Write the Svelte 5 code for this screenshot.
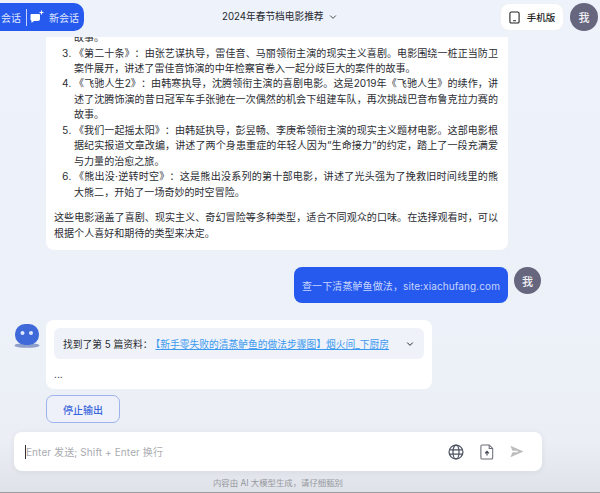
<script>
  const movies = [
    { title: '《第二十条》', body: '：由张艺谋执导，雷佳音、马丽领衔主演的现实主义喜剧。电影围绕一桩正当防卫案件展开，讲述了雷佳音饰演的中年检察官卷入一起分歧巨大的案件的故事。' },
    { title: '《飞驰人生2》', body: '：由韩寒执导，沈腾领衔主演的喜剧电影。这是2019年《飞驰人生》的续作，讲述了沈腾饰演的昔日冠军车手张驰在一次偶然的机会下组建车队，再次挑战巴音布鲁克拉力赛的故事。' },
    { title: '《我们一起摇太阳》', body: '：由韩延执导，彭昱畅、李庚希领衔主演的现实主义题材电影。这部电影根据纪实报道文章改编，讲述了两个身患重症的年轻人因为“生命接力”的约定，踏上了一段充满爱与力量的治愈之旅。' },
    { title: '《熊出没·逆转时空》', body: '：这是熊出没系列的第十部电影，讲述了光头强为了挽救旧时间线里的熊大熊二，开始了一场奇妙的时空冒险。' }
  ];
</script>

<div class="page">
  <header class="top">
    <div class="chat-actions">
      <span class="clipped">会话</span>
      <span class="divider"></span>
      <svg class="new-icon" viewBox="0 0 14 14" width="14" height="14">
        <path d="M1.500 4h7.500a1 1 0 0 1 1 1v4a2 2 0 0 1-2 2H4l-2.500 2v-2.200A1.500 1.500 0 0 1 .5 9.500V5a1 1 0 0 1 1-1z" fill="#fff"/>
        <path d="M11.500 .5v4M9.500 2.500h4" stroke="#fff" stroke-width="1.200"/>
      </svg>
      <span>新会话</span>
    </div>
    <div class="title">
      <span>2024年春节档电影推荐</span>
      <svg viewBox="0 0 10 10" width="8" height="8"><path d="M1.500 3.200 5 6.700l3.500-3.500" fill="none" stroke="#333" stroke-width="1.100"/></svg>
    </div>
    <div class="top-right">
      <button class="mobile">
        <svg viewBox="0 0 12 14" width="11" height="13"><rect x="1" y="1" width="10" height="12" rx="1.500" fill="none" stroke="#222" stroke-width="1.200"/><path d="M4.500 10.500h3" stroke="#222" stroke-width="1.100"/></svg>
        手机版
      </button>
      <div class="avatar">我</div>
    </div>
  </header>

  <main class="messages">
    <section class="card answer">
      <p class="orphan">故事。</p>
      <ol start="3">
        {#each movies as m}
          <li>{m.title}{m.body}</li>
        {/each}
      </ol>
      <p class="summary">这些电影涵盖了喜剧、现实主义、奇幻冒险等多种类型，适合不同观众的口味。在选择观看时，可以根据个人喜好和期待的类型来决定。</p>
    </section>

    <div class="user-row">
      <div class="bubble">查一下清蒸鲈鱼做法，site:xiachufang.com</div>
      <div class="avatar">我</div>
    </div>

    <div class="bot-row">
      <svg class="bot" viewBox="0 0 26 24" width="26" height="24">
        <ellipse cx="13" cy="21.500" rx="12.500" ry="2.300" fill="#8f9fcb"/>
        <rect x="1" y="0" width="24" height="21" rx="10" fill="#3f68d8"/>
        <circle cx="8.500" cy="9" r="2" fill="#dfe8ff"/>
        <circle cx="17" cy="9" r="2" fill="#dfe8ff"/>
      </svg>
      <div class="bot-col">
        <section class="card progress">
          <div class="source">
            <span class="found">找到了第 5 篇资料：<a href="#top">【新手零失败的清蒸鲈鱼的做法步骤图】烟火间_下厨房</a></span>
            <svg viewBox="0 0 10 10" width="8" height="8"><path d="M1.500 3.200 5 6.700l3.500-3.500" fill="none" stroke="#222" stroke-width="1.200"/></svg>
          </div>
          <p class="dots">...</p>
        </section>
        <button class="stop">停止输出</button>
      </div>
    </div>
  </main>

  <div class="composer">
    <span class="caret"></span>
    <span class="placeholder">Enter 发送; Shift + Enter 换行</span>
    <div class="tools">
      <svg viewBox="0 0 18 18" width="16" height="16" fill="none" stroke="#4d5263" stroke-width="1.400">
        <circle cx="9" cy="9" r="7.800"/><ellipse cx="9" cy="9" rx="3.400" ry="7.800"/><path d="M1.800 6.500h14.400M1.800 11.500h14.400"/>
      </svg>
      <svg viewBox="0 0 16 18" width="14" height="16" fill="none" stroke="#6a6d78" stroke-width="1.200">
        <path d="M2.500 1h8l4 4v10.500a1.500 1.500 0 0 1-1.500 1.500H2.500A1.500 1.500 0 0 1 1 15.500v-13A1.500 1.500 0 0 1 2.500 1z"/>
        <path d="M10.500 1v4h4" />
        <path d="M8 13V8.500M5.800 10.500 8 8.300l2.200 2.200" stroke="#3f4350" stroke-width="1.300"/>
      </svg>
      <svg viewBox="0 0 16 14" width="14" height="13"><path d="M0.500 0.500 15.500 7 0.500 13.500 2.800 7.800h6V6.200h-6z" fill="#bdbdbd"/></svg>
    </div>
  </div>
  <footer class="note">内容由 AI 大模型生成，请仔细甄别</footer>
</div>

<style>
  :global(body) {
    margin: 0;
    font-family: Inter, "Noto Sans CJK SC", sans-serif;
  }

  .page {
    width: 600px;
    height: 493px;
    overflow: hidden;
    box-sizing: border-box;
    display: flex;
    flex-direction: column;
    border-bottom: 1px solid #9a9ca0;
    background: linear-gradient(180deg, #eef2fa 0, #ecf0f7 78%, #ebeef4 90%, #dfe2e8 100%);
    color: #2b2d33;
    text-spacing-trim: space-all;
  }

  .top {
    flex: none;
    height: 37px;
    display: grid;
    grid-template-columns: 222px 1fr auto;
    align-items: start;
    background: #eef2fa;
  }

  .chat-actions {
    width: 84px;
    height: 28px;
    margin-top: 3px;
    box-sizing: border-box;
    padding-left: 1px;
    display: flex;
    align-items: center;
    background: #2659ee;
    border-radius: 0 10px 10px 0;
    color: #dfe7ff;
    font-size: 10px;
  }

  .divider {
    width: 1px;
    height: 17px;
    margin: 0 3px 0 5px;
    background: #c5d3fb;
  }

  .new-icon {
    margin-right: 5px;
  }

  .title {
    display: flex;
    align-items: center;
    gap: 5px;
    margin-top: 8px;
    font-size: 9.700px;
    line-height: 18px;
    color: #27292f;
  }

  .top-right {
    display: flex;
    gap: 6px;
    margin: 3px 2px 0 0;
  }

  .mobile {
    width: 64px;
    height: 28px;
    padding: 0;
    display: flex;
    align-items: center;
    justify-content: center;
    gap: 7px;
    border: 1px solid #f0f1f5;
    border-radius: 9px;
    background: #fff;
    font: 500 9.500px Inter, "Noto Sans CJK SC", sans-serif;
    color: #222;
  }

  .avatar {
    flex: none;
    width: 28px;
    height: 28px;
    border-radius: 50%;
    background: #66667f;
    color: #f2f2f6;
    display: flex;
    align-items: center;
    justify-content: center;
    font-size: 11px;
    font-weight: 500;
  }

  .messages {
    flex: 1;
    min-height: 0;
    overflow: hidden;
    display: flex;
    flex-direction: column;
    justify-content: flex-end;
  }

  .card {
    background: #fff;
    border-radius: 8px;
  }

  .answer {
    flex: none;
    width: 462px;
    margin-left: 46px;
    box-sizing: border-box;
    padding: 0 10px 9px 8px;
    border-radius: 0 0 8px 8px;
    font-size: 10.060px;
    line-height: 15.450px;
    text-align: justify;
  }

  p {
    margin: 0;
  }

  .orphan {
    padding-left: 20px;
  }

  ol {
    margin: 0;
    padding: 0 0 0 20px;
  }

  .summary {
    margin-top: 10px;
  }

  .user-row {
    flex: none;
    width: 541px;
    display: flex;
    justify-content: flex-end;
    gap: 6px;
    margin: 17px 0;
  }

  .bubble {
    width: 214px;
    height: 36px;
    box-sizing: border-box;
    padding-left: 8px;
    display: flex;
    align-items: center;
    background: #2659ee;
    border-radius: 8px;
    color: #c7d6ff;
    font-size: 10px;
    letter-spacing: .1px;
    white-space: nowrap;
  }

  .user-row .avatar {
    width: 27px;
    height: 27px;
  }

  .bot-row {
    flex: none;
    display: flex;
    gap: 6px;
    padding: 0 0 9px 14px;
  }

  .bot {
    margin-top: 4px;
  }

  .bot-col {
    display: flex;
    flex-direction: column;
    align-items: flex-start;
    gap: 6px;
  }

  .progress {
    width: 386px;
    height: 69px;
    box-sizing: border-box;
    padding: 8px;
    font-size: 10px;
  }

  .source {
    height: 31px;
    box-sizing: border-box;
    padding: 0 10px 0 9px;
    display: flex;
    align-items: center;
    justify-content: space-between;
    background: #eff2f8;
    border-radius: 6px;
  }

  .found {
    white-space: nowrap;
    font-size: 9.750px;
    text-spacing-trim: normal;
  }

  a {
    color: #3d9af0;
    margin-left: 3px;
  }

  .dots {
    margin-top: 8px;
    line-height: 15px;
  }

  .stop {
    width: 74px;
    height: 28px;
    padding: 0;
    border: 1px solid #9cb3ee;
    border-radius: 7px;
    background: #eef1f9;
    color: #3a66dc;
    font: 500 10px Inter, "Noto Sans CJK SC", sans-serif;
  }

  .composer {
    flex: none;
    width: 528px;
    height: 39px;
    margin-left: 14px;
    box-sizing: border-box;
    padding: 0 18px 0 11px;
    display: flex;
    align-items: center;
    background: #fff;
    border-radius: 8px;
    box-shadow: 0 1px 6px rgba(40, 50, 80, .07);
  }

  .caret {
    width: 1px;
    height: 14px;
    background: #333;
  }

  .placeholder {
    font-size: 10px;
    color: #a9abb0;
    letter-spacing: .1px;
  }

  .tools {
    margin-left: auto;
    display: flex;
    align-items: center;
    gap: 16px;
  }

  .note {
    flex: none;
    height: 21px;
    width: 556px;
    display: flex;
    align-items: center;
    justify-content: center;
    font-size: 8.400px;
    color: #96989e;
  }
</style>
